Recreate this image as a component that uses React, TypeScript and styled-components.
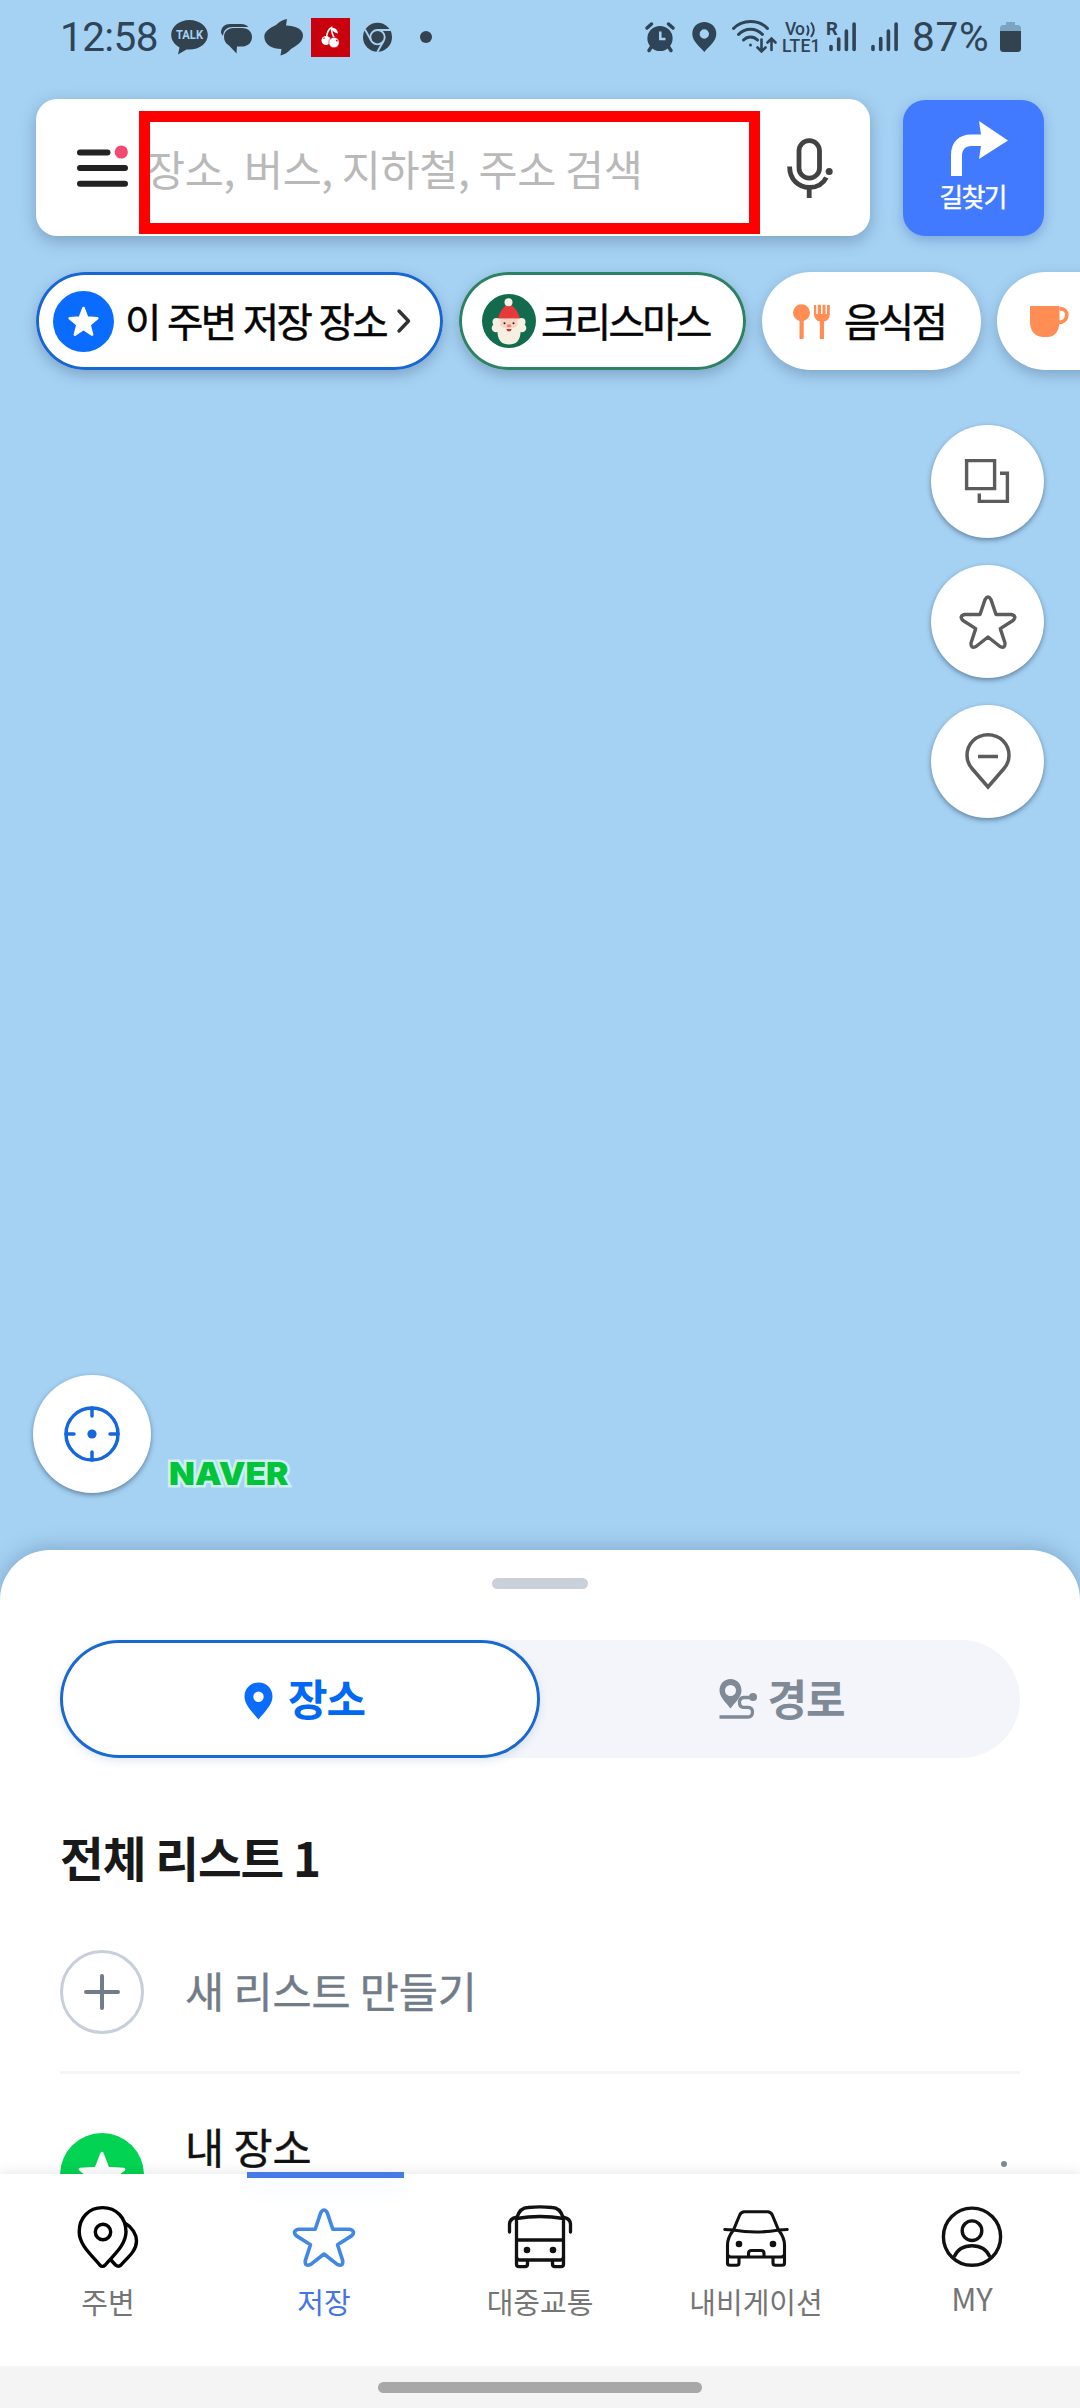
import React from "react";
import styled, { createGlobalStyle } from "styled-components";

const INK = "#2f4456";
const SKY = "#a5d1f3";

const GlobalStyle = createGlobalStyle`
  *, *::before, *::after { box-sizing: border-box; }
  body { margin: 0; background: ${SKY}; }
  button { border: 0; padding: 0; background: none; font: inherit; color: inherit; }
  svg { display: block; flex: none; overflow: visible; }
`;

const Screen = styled.div`
  width: 1080px;
  height: 2408px;
  overflow: hidden;
  display: flex;
  flex-direction: column;
  background: ${SKY};
  font-family: "Noto Sans CJK KR", "Noto Sans", sans-serif;
`;

/* ---------- status bar ---------- */

const StatusBar = styled.header`
  flex: none;
  height: 99px;
  padding: 18px 59px 0 60px;
  display: flex;
  justify-content: space-between;
  color: ${INK};
`;

const StatusGroup = styled.div`
  display: flex;
  height: 40px;
`;

const StatusSlot = styled.div<{ $gap?: number }>`
  margin-left: ${(p) => p.$gap ?? 0}px;
`;

const StatusText = styled.span<{ $width: number; $gap?: number; $spacing?: number }>`
  width: ${(p) => p.$width}px;
  margin-left: ${(p) => p.$gap ?? 0}px;
  font-family: Roboto, sans-serif;
  font-size: 40.5px;
  line-height: 39px;
  letter-spacing: ${(p) => p.$spacing ?? 0}px;
  white-space: nowrap;
`;

/* ---------- search ---------- */

const SearchRow = styled.div`
  flex: none;
  display: flex;
  align-items: flex-end;
  gap: 33px;
  padding: 0 36px;
`;

const SearchBox = styled.div`
  position: relative;
  width: 834px;
  height: 137px;
  padding: 0 37px 0 41px;
  display: flex;
  align-items: center;
  background: #fff;
  border-radius: 21px;
  box-shadow: 0 5px 16px rgba(60, 90, 120, 0.4);
`;

const Placeholder = styled.span`
  flex: 1;
  margin-left: 18px;
  padding-top: 1px;
  font-size: 42.5px;
  line-height: 60px;
  letter-spacing: -0.4px;
  color: #b9b9b9;
  white-space: nowrap;
`;

const Highlight = styled.div`
  position: absolute;
  left: 103px;
  top: 12px;
  width: 621px;
  height: 123px;
  border: 11px solid #fe0000;
`;

const RouteButton = styled.button`
  width: 141px;
  height: 136px;
  padding-top: 21px;
  display: flex;
  flex-direction: column;
  align-items: center;
  border-radius: 22px;
  background: #427aff;
  color: #fff;
  font-size: 26px;
  font-weight: 400;
  -webkit-text-stroke: 0.4px currentColor;
  line-height: 36px;
  letter-spacing: -1.8px;
  box-shadow: 0 4px 12px rgba(50, 90, 170, 0.35);
`;

const RouteLabel = styled.span`
  margin-top: 2px;
  padding-right: 2px;
`;

const RouteGlyph = styled.div`
  padding-left: 11px;
`;

/* ---------- category chips ---------- */

const ChipRow = styled.div`
  flex: none;
  display: flex;
  gap: 16px;
  padding: 36px 0 0 36px;
`;

const Chip = styled.button<{ $width: number; $pad: number; $gap: number; $border?: string }>`
  flex: none;
  width: ${(p) => p.$width}px;
  height: 98px;
  padding-left: ${(p) => p.$pad}px;
  display: flex;
  align-items: center;
  gap: ${(p) => p.$gap}px;
  border-radius: 49px;
  background: #fff;
  box-shadow: ${(p) => (p.$border ? `inset 0 0 0 3px ${p.$border}, ` : "")}0 5px 13px rgba(60, 90, 120, 0.36);
  color: #050505;
  font-size: 39.5px;
  font-weight: 400;
  -webkit-text-stroke: 0.5px currentColor;
  line-height: 56px;
  letter-spacing: -2.6px;
  word-spacing: 2px;
  white-space: nowrap;
`;

const ChipLabel = styled.span`
  padding-bottom: 2px;
`;

/* ---------- floating map buttons ---------- */

const FloatColumn = styled.div`
  flex: none;
  align-self: flex-end;
  display: flex;
  flex-direction: column;
  gap: 27px;
  padding: 55px 36px 0 0;
`;

const RoundButton = styled.button<{ $size: number }>`
  width: ${(p) => p.$size}px;
  height: ${(p) => p.$size}px;
  display: grid;
  place-items: center;
  border-radius: 50%;
  background: #fff;
  box-shadow: 0 2px 5px rgba(50, 75, 100, 0.6);
`;

const MapFooter = styled.div`
  margin-top: auto;
  flex: none;
  display: flex;
  align-items: flex-end;
  gap: 18px;
  padding: 0 0 57px 33px;
`;

const NaverMark = styled.span`
  font-family: Inter, sans-serif;
  font-size: 31px;
  font-weight: 900;
  line-height: 38px;
  color: #00c43a;
  -webkit-text-stroke: 5px #cdefee;
  paint-order: stroke fill;
  transform: scaleX(1.085);
  transform-origin: left;
`;

/* ---------- bottom sheet ---------- */

const Sheet = styled.section`
  flex: none;
  height: 624px;
  padding: 28px 60px 0;
  display: flex;
  flex-direction: column;
  border-radius: 50px 50px 0 0;
  background: #fff;
  box-shadow: 0 -2px 20px rgba(60, 95, 130, 0.35);
  overflow: hidden;
`;

const Grip = styled.div`
  flex: none;
  align-self: center;
  width: 96px;
  height: 11px;
  border-radius: 6px;
  background: #c9d0d9;
`;

const Segments = styled.div`
  flex: none;
  display: grid;
  grid-template-columns: 1fr 1fr;
  height: 118px;
  margin-top: 51px;
  border-radius: 59px;
  background: #f3f5fa;
`;

const Segment = styled.button<{ $active?: boolean }>`
  display: flex;
  align-items: center;
  justify-content: center;
  gap: ${(p) => (p.$active ? 15 : 9)}px;
  padding-left: ${(p) => (p.$active ? 9 : 4)}px;
  border-radius: 59px;
  font-size: 43px;
  font-weight: 700;
  line-height: 60px;
  letter-spacing: -1px;
  color: ${(p) => (p.$active ? "#0068f5" : "#808a97")};
  background: ${(p) => (p.$active ? "#fff" : "transparent")};
  box-shadow: ${(p) => (p.$active ? "inset 0 0 0 3px #1a68d2, 0 3px 9px rgba(40, 90, 160, 0.14)" : "none")};
`;

const SegmentLabel = styled.span`
  padding-bottom: 5px;
`;

const SheetTitle = styled.h2`
  flex: none;
  margin: 64px 0 0;
  font-size: 47.5px;
  font-weight: 700;
  line-height: 70px;
  letter-spacing: -1px;
  color: #191919;
`;

const ListRow = styled.div<{ $divider?: boolean }>`
  flex: none;
  height: ${(p) => (p.$divider ? 182 : 160)}px;
  display: flex;
  align-items: flex-start;
  gap: 41px;
  padding-top: ${(p) => (p.$divider ? 58 : 59)}px;
  border-bottom: ${(p) => (p.$divider ? "3px solid #f4f5f7" : "0")};
`;

const ListLabel = styled.span<{ $color: string; $top: number }>`
  flex: 1;
  margin-top: ${(p) => p.$top}px;
  font-size: 42.5px;
  line-height: 44px;
  letter-spacing: -0.1px;
  -webkit-text-stroke: 0.4px currentColor;
  color: ${(p) => p.$color};
`;

const AddCircle = styled.div`
  width: 84px;
  height: 84px;
  display: grid;
  place-items: center;
  border: 3px solid #c8cfda;
  border-radius: 50%;
`;

const StarCircle = styled.div`
  width: 84px;
  height: 84px;
  padding-top: 18px;
  display: flex;
  justify-content: center;
  border-radius: 50%;
  background: #03d353;
`;

const MoreDot = styled.i`
  width: 6px;
  height: 6px;
  margin: 28px 13px 0 0;
  border-radius: 50%;
  background: #7f8b99;
`;

/* ---------- tab bar ---------- */

const TabBar = styled.nav`
  position: relative;
  flex: none;
  height: 192px;
  display: grid;
  grid-template-columns: repeat(5, 216px);
  background: #fff;
  box-shadow: 0 -2px 12px rgba(0, 0, 0, 0.09);
`;

const Tab = styled.button<{ $active?: boolean }>`
  position: relative;
  display: flex;
  flex-direction: column;
  align-items: center;
  padding-top: 30px;
  color: ${(p) => (p.$active ? "#4575e4" : "#757575")};
  font-size: 29px;
  line-height: 42px;
  letter-spacing: 0;
`;

const TabLabel = styled.span<{ $latin?: boolean }>`
  margin-top: ${(p) => (p.$latin ? 7 : 10)}px;
  font-size: ${(p) => (p.$latin ? 31 : 29)}px;
`;

const TabIndicator = styled.div`
  position: absolute;
  top: -2px;
  left: 31px;
  width: 157px;
  height: 6px;
  background: #4779e9;
  box-shadow: 0 10px 18px rgba(70, 120, 230, 0.09);
`;

const HomeBar = styled.footer`
  position: relative;
  flex: none;
  height: 42px;
  padding-top: 16px;
  display: flex;
  justify-content: center;
  background: #f4f4f4;
`;

const HomeHandle = styled.div`
  width: 324px;
  height: 11px;
  border-radius: 6px;
  background: #a8a8a8;
`;

/* ---------- drawings ---------- */

const STAR_OUTLINE =
  "M25 4.6Q28 -.6 31 4.6L36 19.5L51 19.5Q57.5 21 53 25.5L40.3 33.6L45 48Q45.5 54 40 51.5L28 42L16 51.5Q10.5 54 11 48L15.7 33.6L3 25.5Q-1.5 21 5 19.5L20 19.5Z";

const OutlineStar = ({ w, h, color }: { w: number; h: number; color: string }) => (
  <svg width={w} height={h} viewBox="0 0 56 54">
    <path d={STAR_OUTLINE} fill="none" stroke={color} strokeWidth="3.4" strokeLinejoin="round" />
  </svg>
);

const SolidStar = ({ size }: { size: number }) => (
  <svg width={size} height={size} viewBox="0 0 30 30">
    <path
      d="M15 1.5L18.6 10.9L28.6 11.4L20.8 17.7L23.5 27.4L15 21.9L6.5 27.4L9.2 17.7L1.4 11.4L11.4 10.9Z"
      fill="#fff"
      stroke="#fff"
      strokeWidth="2"
      strokeLinejoin="round"
    />
  </svg>
);

const TalkIcon = () => (
  <svg width="37" height="40" viewBox="0 0 37 40" fill="#33424f">
    <path d="M18.5 2C8.5 2 .2 8.500 .2 16.800C.2 22.200 3.600 26.800 8.500 29.500L7 36.500L15.500 31.500C28 32.500 36.800 25.500 36.800 16.800C36.800 8.500 28.500 2 18.500 2Z" />
    <text x="18.500" y="21.300" textAnchor="middle" fontFamily="Roboto, sans-serif" fontWeight="700" fontSize="12.500" fill={SKY} textLength="27" lengthAdjust="spacingAndGlyphs">
      TALK
    </text>
  </svg>
);

const BubblesIcon = () => (
  <svg width="31" height="40" viewBox="0 0 31 40" fill="#33424f">
    <path d="M0 15C0 9 4 6 9 6H20C24 6 26 7.500 27.500 9H12C6 9 2.500 12 2 18Z" />
    <path d="M12.500 10H21C27.500 10 31 14 31 19C31 24.500 27 28 22 28.500H16L15.500 35.500L8 27.500C5 25.500 3 23 3 19C3 13.500 7 10 12.500 10Z" />
  </svg>
);

const SwirlIcon = () => (
  <svg width="39" height="40" viewBox="0 0 39 40" fill="#33424f">
    <path d="M23 1L22 7.500C31 7.500 38.500 11 39 17C39.300 24 32 28 27 31Q22.500 36 16.500 37.500L17.500 31C8 31 .8 27 .3 19C0 13 7 9.500 12 7Q17 2 23 1Z" />
  </svg>
);

const CherryIcon = () => (
  <svg width="39" height="40" viewBox="0 0 39 40">
    <rect width="39" height="39" fill="#c9000d" />
    <g fill="none" stroke="#fff" strokeWidth="1.600" strokeLinecap="round">
      <path d="M15.500 20Q16 12 20.500 9.500Q20.500 16 24 21" />
    </g>
    <path d="M20 9.500Q26.500 9.500 27 15.500Q21.500 14.500 20 9.500Z" fill="#fff" />
    <circle cx="15" cy="22.500" r="4.500" fill="#fff" />
    <circle cx="23" cy="24.500" r="5.200" fill="#fff" stroke="#c9000d" strokeWidth=".6" />
    <path d="M25 22l1.500 1.300M12.500 20.700l1 -1" stroke="#c9000d" strokeWidth="1.200" />
  </svg>
);

const ChromeIcon = () => (
  <svg width="29" height="40" viewBox="0 0 29 40">
    <circle cx="14.500" cy="19.200" r="14.500" fill="#33424f" />
    <g fill="none" stroke={SKY} strokeWidth="1.900">
      <circle cx="14.500" cy="19.200" r="7.200" />
      <path d="M14.500 12H27.500M8.300 22.700L2 11.500M20.700 22.800L14.300 34" />
    </g>
  </svg>
);

const AlarmIcon = () => (
  <svg width="30" height="40" viewBox="0 0 30 40">
    <circle cx="15" cy="20.500" r="12.600" fill={INK} />
    <path d="M2 10L6.500 6M28 10L23.500 6M6 29.500L4 32.500M24 29.500L26 32.500" stroke={INK} strokeWidth="3.500" strokeLinecap="round" />
    <path d="M15.300 13.500V21H20.500" fill="none" stroke={SKY} strokeWidth="2.500" />
  </svg>
);

const StatusPin = () => (
  <svg width="25" height="40" viewBox="0 0 25 40">
    <path d="M12.300 4C5.500 4 .3 9 .3 15.800C.3 23.500 8 29 12.300 34C16.600 29 24.300 23.500 24.300 15.800C24.300 9 19 4 12.300 4ZM12.300 11.300A4.700 4.700 0 1 1 12.300 20.700A4.700 4.700 0 1 1 12.300 11.300Z" fill={INK} fillRule="evenodd" />
  </svg>
);

const WifiIcon = () => (
  <svg width="44" height="40" viewBox="0 0 44 40" fill="none" stroke={INK} strokeWidth="3" strokeLinecap="round">
    <path d="M1.500 10.500C10 1 27 1 35.500 10.500M6.500 16.500C13 9.500 24 9.500 30.500 16.500M11.500 22C15.500 18 21.500 18 25.500 22" />
    <circle cx="18.500" cy="27" r="1.500" fill={INK} stroke="none" />
    <path d="M29.500 21.500V33M25.500 29.500L29.500 33.500L33.500 29.500M39.500 32V21M35.500 24.500L39.500 20.500L43.500 24.500" strokeWidth="2.600" />
  </svg>
);

const VolteIcon = () => (
  <svg width="39" height="40" viewBox="0 0 39 40" fill={INK} fontFamily="Roboto, sans-serif" fontWeight="500">
    <text x="3" y="17.300" fontSize="17.500" textLength="20">Vo</text>
    <path d="M25 7.500Q28 11.500 25 17.500M29 4.500Q34.500 11.500 29 19" fill="none" stroke={INK} strokeWidth="2" />
    <text x="0" y="34" fontSize="17.500" textLength="38.500">LTE1</text>
  </svg>
);

const SignalBars = ({ roaming }: { roaming?: boolean }) => {
  const dx = roaming ? 3 : 1;
  const tops = roaming ? [28.500, 21, 13, 6] : [28.500, 20.500, 13, 6];
  return (
    <svg width={roaming ? 30 : 27} height="40" viewBox={`0 0 ${roaming ? 30 : 27} 40`}>
      {roaming && (
        <text x="-1" y="17" fontFamily="Roboto, sans-serif" fontWeight="700" fontSize="18.500" fill={INK}>
          R
        </text>
      )}
      {tops.map((t, i) => (
        <path key={i} d={`M${dx + 1 + i * 7.700} ${t}V31.500`} stroke={INK} strokeWidth="3.600" strokeLinecap="round" />
      ))}
    </svg>
  );
};

const BatteryIcon = () => (
  <svg width="21" height="40" viewBox="0 0 21 40">
    <path d="M6 4H15V7H18.500Q21 7.500 21 10V15H0V10Q0 7.500 2.500 7H6Z" fill="#7ba3c4" />
    <path d="M0 13H21V30.500Q21 34 17.500 34H3.500Q0 34 0 30.500Z" fill="#33424f" />
  </svg>
);

const MenuIcon = () => (
  <svg width="51" height="48" viewBox="0 3 51 48">
    <path d="M3 11.500H30.500M3 27H48M3 42.700H48" stroke="#222" strokeWidth="6" strokeLinecap="round" />
    <circle cx="44.300" cy="11" r="6.600" fill="#f54a70" />
  </svg>
);

const MicIcon = () => (
  <svg width="46" height="60" viewBox="0 0 46 60" fill="none" stroke="#424242" strokeWidth="4.800">
    <rect x="12" y="2.600" width="20.500" height="37.500" rx="10.200" />
    <path d="M2.600 28.500C2.600 42 12 49.500 22.200 49.500C30 49.500 36 46 39.300 39.500M22.200 49.500V60" />
    <circle cx="42.200" cy="33.500" r="3.500" fill="#424242" stroke="none" />
  </svg>
);

const TurnIcon = () => (
  <svg width="57" height="55" viewBox="0 0 57 55">
    <path d="M0 55V34C0 21 8 13.500 20 13.500H30L28 0L57 19.500L28 38L30 25H20.500C14 25 11 29 11 35V55Z" fill="#fff" />
  </svg>
);

const SavedBadge = () => (
  <svg width="61" height="61" viewBox="0 0 61 61">
    <circle cx="30.500" cy="30.500" r="30.500" fill="#0a6cff" />
    <path
      d="M30.500 17L34.200 26.600L44.300 27.200L36.500 33.700L39.100 43.600L30.500 38L21.900 43.600L24.500 33.700L16.700 27.200L26.800 26.600Z"
      fill="#fff"
      stroke="#fff"
      strokeWidth="2.600"
      strokeLinejoin="round"
    />
  </svg>
);

const ChevronIcon = () => (
  <svg width="14" height="24" viewBox="0 0 14 24">
    <path d="M2 2L11.500 12L2 22" fill="none" stroke="#333" strokeWidth="3.400" strokeLinecap="round" strokeLinejoin="round" />
  </svg>
);

const SantaIcon = () => (
  <svg width="54" height="54" viewBox="0 0 54 54">
    <circle cx="27" cy="27" r="27" fill="#126b4d" />
    <g fill="#f7efe2">
      <circle cx="14.500" cy="28" r="4" />
      <circle cx="39.500" cy="28" r="4" />
      <circle cx="14" cy="34" r="4.300" />
      <circle cx="40" cy="34" r="4.300" />
      <path d="M15.500 24H38.500V39Q37.500 50.500 27 50.500Q16.500 50.500 15.500 39Z" />
    </g>
    <path d="M18.500 25H35.500V31Q34 34.500 27 34.500Q20 34.500 18.500 31Z" fill="#f7d3c2" />
    <path d="M16 24.500Q18.500 15 25 10.500H28.500Q35.500 15 38 24.500Z" fill="#e5393b" />
    <circle cx="26.500" cy="8.300" r="4" fill="#f9f2e8" />
    <circle cx="22.500" cy="29.300" r="1" fill="#222" />
    <circle cx="31.500" cy="29.300" r="1" fill="#222" />
    <ellipse cx="27" cy="31.800" rx="2.400" ry="1.500" fill="#ea8576" />
    <path d="M24.300 35H29.700Q29 37.500 27 37.500Q25 37.500 24.300 35Z" fill="#c9303a" />
  </svg>
);

const FoodIcon = () => (
  <svg width="37" height="35" viewBox="0 0 37 35" fill="#ff8d54">
    <circle cx="8.500" cy="8.800" r="8.500" />
    <rect x="6.500" y="14" width="4.200" height="21" rx="1" />
    <path d="M21 1H23.200V10H24.800V.8H28V10H29.500V.8H32.500V10H34V1H36.800V10.500Q36.500 16.500 31 17.500V35H26.800V17.500Q21.500 16.500 21 10.500Z" />
  </svg>
);

const CafeIcon = () => (
  <svg width="39" height="31" viewBox="0 0 39 31">
    <path d="M0 0H29.500V17Q28 31 17 31H12.500Q1 30 0 17Z" fill="#ff8d54" />
    <path d="M29.500 3C39.500 1.500 39.500 16.500 28.500 16.500" fill="none" stroke="#ff8d54" strokeWidth="3.600" />
  </svg>
);

const LayersIcon = () => (
  <svg width="45" height="45" viewBox="0 0 45 45" fill="none" stroke="#5c5c5c" strokeWidth="3.400">
    <path d="M1.600 1.600H29.600V29.600H1.600Z" />
    <path d="M35 14.300H42.400V42.400H14.300V34.500" />
  </svg>
);

const RemovePinIcon = () => (
  <svg width="46" height="57" viewBox="0 0 46 57" fill="none" stroke="#5c5c5c" strokeWidth="3.500">
    <path d="M23 1.800C11 1.800 2 11 2 22.500C2 28 4 32 7 35.500L23 54L39 35.500C42 32 44 28 44 22.500C44 11 35 1.800 23 1.800Z" />
    <path d="M13 23.500H33" />
  </svg>
);

const TargetIcon = () => (
  <svg width="56" height="56" viewBox="0 0 56 56" fill="none" stroke="#1567dc" strokeWidth="3.500">
    <circle cx="28" cy="28" r="26" />
    <path d="M28 2V10M28 46V54M2 28H10M46 28H54" strokeLinecap="round" />
    <circle cx="28" cy="28" r="4.600" fill="#1567dc" stroke="none" />
  </svg>
);

const PlacePin = () => (
  <svg width="29" height="37" viewBox="0 0 29 37">
    <path d="M14.500 0C6.500 0 .5 6 .5 14C.5 22.500 9 30 14.500 37C20 30 28.500 22.500 28.500 14C28.500 6 22.500 0 14.500 0ZM14.500 9A5.200 5.200 0 1 1 14.500 19.400A5.200 5.200 0 1 1 14.500 9Z" fill="#0a6cfa" fillRule="evenodd" transform="translate(0 1.500)" />
  </svg>
);

const RouteIcon = () => (
  <svg width="39" height="40" viewBox="0 0 39 40">
    <path d="M11.500 0C5 0 .5 5 .5 11.500C.5 18.500 7.500 24 11.500 29.500C15.500 24 22.500 18.500 22.500 11.500C22.500 5 18 0 11.500 0ZM11.500 6A5.500 5.500 0 1 1 11.500 17A5.500 5.500 0 1 1 11.500 6Z" fill="#808a97" fillRule="evenodd" />
    <path d="M33 18.500H25Q21.500 18.500 20.500 22Q20 28 24 28.300H29Q33.500 28.500 33.500 33Q33.300 38 29 38H.5" fill="none" stroke="#808a97" strokeWidth="3.300" />
    <circle cx="34" cy="18" r="4" fill="#808a97" />
  </svg>
);

const PlusIcon = () => (
  <svg width="36" height="36" viewBox="0 0 36 36">
    <path d="M18 2V34M2 18H34" stroke="#727c8a" strokeWidth="4" strokeLinecap="round" />
  </svg>
);

const NearbyIcon = () => (
  <svg width="66" height="66" viewBox="0 0 66 66" fill="none" stroke="#000" strokeWidth="3.400" strokeLinejoin="round">
    <path d="M27.500 3.600C13.800 3.600 4.200 14 4.200 27.800C4.200 41 16.500 51 24.800 61Q27.500 63.800 30.200 61C38.500 51 51 41 51 27.800C51 14 41.500 3.600 27.500 3.600Z" />
    <circle cx="28" cy="28" r="7.700" />
    <path d="M50.500 19.500C57 23 61.500 30.500 61.500 37C61.500 47 52.500 53.500 46 61Q43.500 63.500 40.500 61L36 56" />
  </svg>
);

const BusIcon = () => (
  <svg width="66" height="66" viewBox="0 0 66 66" fill="none" stroke="#111" strokeWidth="3.300" strokeLinejoin="round" strokeLinecap="round">
    <path d="M9.800 13.500C12 7 15.500 3.500 21 3.500Q33 2.300 45 3.500C50.500 3.500 54 7 56.200 13.500" />
    <path d="M9.500 14.500Q33 10.500 56.500 14.500M9.500 13.500V53Q9.500 56 12.500 56H53.500Q56.500 56 56.500 53V13.500M9.500 36H56.500" />
    <path d="M2.500 28V20Q3 14.500 9 13.500M63.500 28V20Q63 14.500 57 13.500M9.500 53V60Q9.500 62.700 12 62.700H18Q20.500 62.700 20.500 60V56.500M56.500 53V60Q56.500 62.700 54 62.700H48Q45.500 62.700 45.500 60V56.500" />
    <circle cx="20" cy="46" r="3.300" fill="#111" stroke="none" />
    <circle cx="46" cy="46" r="3.300" fill="#111" stroke="none" />
  </svg>
);

const CarIcon = () => (
  <svg width="66" height="66" viewBox="0 0 66 66" fill="none" stroke="#111" strokeWidth="3.100" strokeLinejoin="round" strokeLinecap="round">
    <path d="M10.500 26L16.500 11.500Q18 7.800 21.500 7.800H44.500Q48 7.800 49.500 11.500L55.500 26" />
    <path d="M1.800 25.500L10 26Q33 30 56 26L64.200 25.500M10.500 26Q4.500 33.500 4.500 41V50Q4.500 53 8 53H58Q61.500 53 61.500 50V41Q61.500 33.500 55.500 26" />
    <path d="M4.500 50V59Q4.500 61.300 7 61.300H13.500Q16 61.300 16 59V53.500M61.500 50V59Q61.500 61.300 59 61.300H52.500Q50 61.300 50 59V53.500M25.500 52.500V49.500Q25.500 46.500 28.500 46.500H38Q41 46.500 41 49.500V52.500" />
    <circle cx="16" cy="40" r="3.300" fill="#111" stroke="none" />
    <circle cx="50" cy="40" r="3.300" fill="#111" stroke="none" />
  </svg>
);

const ProfileIcon = () => (
  <svg width="66" height="66" viewBox="0 0 66 66" fill="none" stroke="#111" strokeWidth="3.400">
    <circle cx="33" cy="32.700" r="28.600" />
    <circle cx="33" cy="26.700" r="9.800" />
    <path d="M15 53C18.500 45 25 41.700 33 41.700C41 41.700 47.500 45 51 53" />
  </svg>
);

const NavStar = () => (
  <svg width="66" height="66" viewBox="0 0 66 66">
    <g transform="translate(2.200 3.800) scale(1.100)">
      <path d={STAR_OUTLINE} fill="none" stroke="#4288e2" strokeWidth="3.300" strokeLinejoin="round" />
    </g>
  </svg>
);

const tabs = [
  { label: "주변", icon: <NearbyIcon /> },
  { label: "저장", icon: <NavStar />, active: true },
  { label: "대중교통", icon: <BusIcon /> },
  { label: "내비게이션", icon: <CarIcon /> },
  { label: "MY", icon: <ProfileIcon />, latin: true },
];

export default function App() {
  return (
    <>
      <GlobalStyle />
      <Screen>
        <StatusBar>
          <StatusGroup>
            <StatusText $width={111} $spacing={-0.6}>12:58</StatusText>
            <TalkIcon />
            <StatusSlot $gap={13}><BubblesIcon /></StatusSlot>
            <StatusSlot $gap={12}><SwirlIcon /></StatusSlot>
            <StatusSlot $gap={8}><CherryIcon /></StatusSlot>
            <StatusSlot $gap={13}><ChromeIcon /></StatusSlot>
            <StatusSlot $gap={28}>
              <svg width="12" height="40" viewBox="0 0 12 40"><circle cx="6" cy="19" r="6" fill="#33424f" /></svg>
            </StatusSlot>
          </StatusGroup>
          <StatusGroup>
            <AlarmIcon />
            <StatusSlot $gap={17}><StatusPin /></StatusSlot>
            <StatusSlot $gap={15}><WifiIcon /></StatusSlot>
            <StatusSlot $gap={6}><VolteIcon /></StatusSlot>
            <StatusSlot $gap={6}><SignalBars roaming /></StatusSlot>
            <StatusSlot $gap={14}><SignalBars /></StatusSlot>
            <StatusText $gap={14} $width={82} $spacing={0.7}>87%</StatusText>
            <StatusSlot $gap={6}><BatteryIcon /></StatusSlot>
          </StatusGroup>
        </StatusBar>

        <SearchRow>
          <SearchBox>
            <MenuIcon />
            <Placeholder>장소, 버스, 지하철, 주소 검색</Placeholder>
            <MicIcon />
            <Highlight />
          </SearchBox>
          <RouteButton>
            <RouteGlyph><TurnIcon /></RouteGlyph>
            <RouteLabel>길찾기</RouteLabel>
          </RouteButton>
        </SearchRow>

        <ChipRow>
          <Chip $width={407} $pad={17} $gap={11} $border="#1866d2">
            <SavedBadge />
            <ChipLabel>이 주변 저장 장소</ChipLabel>
            <ChevronIcon />
          </Chip>
          <Chip $width={287} $pad={23} $gap={5} $border="#2c8264">
            <SantaIcon />
            <ChipLabel>크리스마스</ChipLabel>
          </Chip>
          <Chip $width={219} $pad={31} $gap={14}>
            <FoodIcon />
            <ChipLabel>음식점</ChipLabel>
          </Chip>
          <Chip $width={190} $pad={33} $gap={15}>
            <CafeIcon />
          </Chip>
        </ChipRow>

        <FloatColumn>
          <RoundButton $size={113}><LayersIcon /></RoundButton>
          <RoundButton $size={113}><OutlineStar w={56} h={54} color="#5c5c5c" /></RoundButton>
          <RoundButton $size={113}><RemovePinIcon /></RoundButton>
        </FloatColumn>

        <MapFooter>
          <RoundButton $size={118}><TargetIcon /></RoundButton>
          <NaverMark>NAVER</NaverMark>
        </MapFooter>

        <Sheet>
          <Grip />
          <Segments>
            <Segment $active><PlacePin /><SegmentLabel>장소</SegmentLabel></Segment>
            <Segment><RouteIcon /><SegmentLabel>경로</SegmentLabel></Segment>
          </Segments>
          <SheetTitle>전체 리스트 1</SheetTitle>
          <ListRow $divider>
            <AddCircle><PlusIcon /></AddCircle>
            <ListLabel $color="#727c89" $top={18}>새 리스트 만들기</ListLabel>
          </ListRow>
          <ListRow>
            <StarCircle><SolidStar size={48} /></StarCircle>
            <ListLabel $color="#111" $top={-9}>내 장소</ListLabel>
            <MoreDot />
          </ListRow>
        </Sheet>

        <TabBar>
          {tabs.map((t) => (
            <Tab key={t.label} $active={t.active}>
              {t.active && <TabIndicator />}
              {t.icon}
              <TabLabel $latin={t.latin}>{t.label}</TabLabel>
            </Tab>
          ))}
        </TabBar>
        <HomeBar><HomeHandle /></HomeBar>
      </Screen>
    </>
  );
}
